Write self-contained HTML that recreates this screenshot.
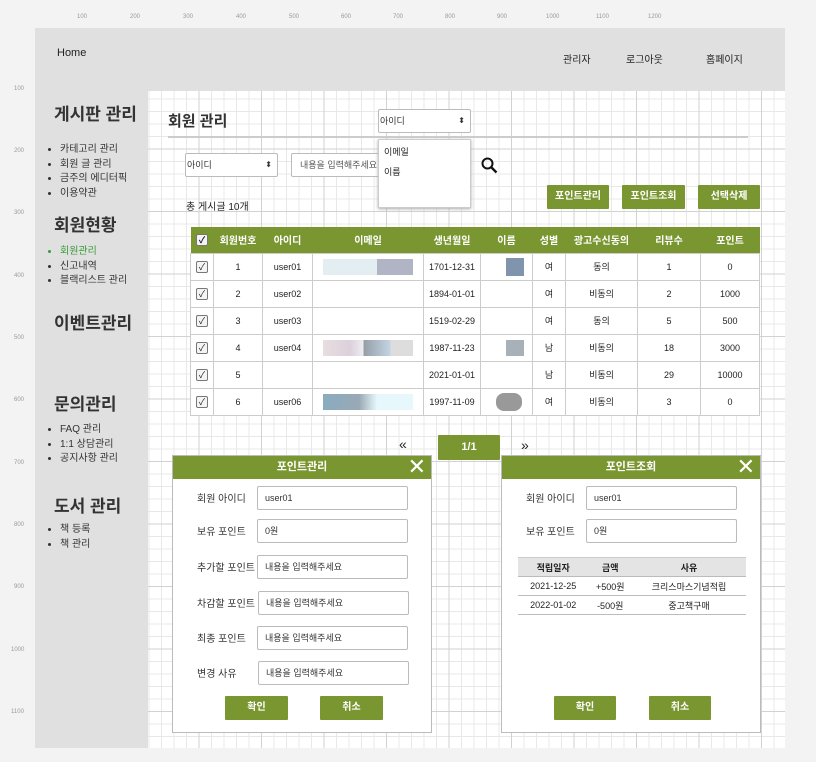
<!DOCTYPE html><html><head><meta charset="utf-8"><style>
*{box-sizing:border-box;margin:0;padding:0}
body{width:816px;height:762px;background:#f3f3f3;font-family:"Liberation Sans","Noto Sans CJK KR",sans-serif;position:relative;overflow:hidden;color:#222}
.abs{position:absolute}
#frame{left:35px;top:28px;width:750px;height:720px;background:#e0e0e0}
#grid{left:148px;top:91px;width:637px;height:657px;background-color:#fff;
background-image:linear-gradient(#d2d2d2 1px,transparent 1px),linear-gradient(90deg,#d2d2d2 1px,transparent 1px),linear-gradient(#e8e8e8 1px,transparent 1px),linear-gradient(90deg,#e8e8e8 1px,transparent 1px);
background-size:62.5px 62.5px,62.5px 62.5px,12.5px 12.5px,12.5px 12.5px;background-position:-12px -5px}
h2.s{position:absolute;left:54px;font-size:17px;font-weight:bold;color:#333;line-height:22px}
ul.s{position:absolute;left:47px;font-size:10px;line-height:14.5px;margin-left:13px;color:#333}
.green{background:#7a9630;color:#fff}
.btn{position:absolute;height:24px;font-size:10px;font-weight:bold;text-align:center;line-height:24px;border-radius:1px}
table{border-collapse:collapse;font-size:9px}
.mt td{border:1px solid #ccc;text-align:center;height:27px;background:#fff}
th{color:#fff;font-size:10px;height:26px;font-weight:bold}
.cb{display:inline-block;width:12px;height:12px;border:1px solid #777;border-radius:2px;background:#f4f4f4;font-size:9px;line-height:10px;color:#222}
.modal{background:#fff;border:1px solid #bbb}
.mh{height:23px;font-size:11px;font-weight:bold;text-align:center;line-height:23px;position:relative}
.x{position:absolute;right:5px;top:1px;font-size:22px;line-height:20px;font-weight:normal}
.lbl{position:absolute;font-size:10px;color:#333}
.inp{position:absolute;height:24px;border:1px solid #bbb;border-radius:2px;font-size:9px;line-height:22px;padding-left:7px;color:#333;background:#fff}
.ruler{font-size:6px;color:#999}
.pt td{border:0;border-bottom:1px solid #bbb;height:19px;text-align:center;background:#fff}
</style></head><body>
<div class="abs ruler" style="left:77px;top:14px;width:700px">
<span class="abs" style="left:0">100</span><span class="abs" style="left:53px">200</span><span class="abs" style="left:106px">300</span><span class="abs" style="left:159px">400</span><span class="abs" style="left:212px">500</span><span class="abs" style="left:264px">600</span><span class="abs" style="left:316px">700</span><span class="abs" style="left:368px">800</span><span class="abs" style="left:420px">900</span><span class="abs" style="left:469px">1000</span><span class="abs" style="left:519px">1100</span><span class="abs" style="left:571px">1200</span></div>
<div class="abs ruler" style="left:14px;top:86px"><div class="abs" style="top:0">100</div><div class="abs" style="top:62px">200</div><div class="abs" style="top:124px">300</div><div class="abs" style="top:187px">400</div><div class="abs" style="top:249px">500</div><div class="abs" style="top:311px">600</div><div class="abs" style="top:374px">700</div><div class="abs" style="top:436px">800</div><div class="abs" style="top:498px">900</div><div class="abs" style="left:-3px;top:561px">1000</div><div class="abs" style="left:-3px;top:623px">1100</div></div>
<div id="frame" class="abs"></div>
<div id="grid" class="abs"></div>
<div class="abs" style="left:57px;top:47px;font-size:11px">Home</div>
<div class="abs" style="left:563px;top:51px;font-size:10px">관리자</div>
<div class="abs" style="left:626px;top:51px;font-size:10px">로그아웃</div>
<div class="abs" style="left:706px;top:51px;font-size:10px">홈페이지</div>

<h2 class="s" style="top:104px">게시판 관리</h2>
<ul class="s" style="top:143px"><li>카테고리 관리</li><li>회원 글 관리</li><li>금주의 에디터픽</li><li>이용약관</li></ul>
<h2 class="s" style="top:215px">회원현황</h2>
<ul class="s" style="top:245px"><li style="color:#3a9a3a">회원관리</li><li>신고내역</li><li>블랙리스트 관리</li></ul>
<h2 class="s" style="top:313px">이벤트관리</h2>
<h2 class="s" style="top:394px">문의관리</h2>
<ul class="s" style="top:423px"><li>FAQ 관리</li><li>1:1 상담관리</li><li>공지사항 관리</li></ul>
<h2 class="s" style="top:496px">도서 관리</h2>
<ul class="s" style="top:523px"><li>책 등록</li><li>책 관리</li></ul>

<div class="abs" style="left:168px;top:110px;font-size:15px;font-weight:bold;color:#333">회원 관리</div>
<div class="abs" style="left:168px;top:136px;width:580px;height:2px;background:#ccc"></div>
<div class="inp" style="left:185px;top:153px;width:93px;padding-left:1px">아이디<span style="position:absolute;right:5px;font-size:8px">⬍</span></div>
<div class="inp" style="left:291px;top:153px;width:100px;padding-left:8px;color:#555">내용을 입력해주세요</div>
<svg class="abs" style="left:481px;top:157px" width="17" height="17" viewBox="0 0 17 17"><circle cx="6.5" cy="6.5" r="5" fill="none" stroke="#111" stroke-width="2"/><line x1="10" y1="10" x2="15.5" y2="15.5" stroke="#111" stroke-width="2.4"/></svg>
<div class="inp" style="left:378px;top:109px;width:93px;padding-left:1px">아이디<span style="position:absolute;right:5px;font-size:8px">⬍</span></div>
<div class="abs" style="left:378px;top:139px;width:93px;height:69px;background:#fff;border:1px solid #ccc;box-shadow:0 1px 3px #aaa;font-size:9px;padding:2px 0 0 5px;line-height:20px">이메일<br>이름</div>
<div class="abs" style="left:186px;top:198px;font-size:10px">총 게시글 10개</div>
<div class="btn green" style="left:547px;top:185px;width:62px">포인트관리</div>
<div class="btn green" style="left:622px;top:185px;width:63px">포인트조회</div>
<div class="btn green" style="left:698px;top:185px;width:62px">선택삭제</div>
<table class="abs mt" style="left:190px;top:227px;width:570px">
<tr class="green"><th style="width:23px"><span class="cb">✓</span></th><th style="width:49px">회원번호</th><th style="width:50px">아이디</th><th style="width:111px">이메일</th><th style="width:57px">생년월일</th><th style="width:52px">이름</th><th style="width:33px">성별</th><th style="width:72px">광고수신동의</th><th style="width:63px">리뷰수</th><th>포인트</th></tr>
<tr><td><span class="cb">✓</span></td><td>1</td><td>user01</td><td><div style="margin:auto;width:90px;height:16px;background:linear-gradient(90deg,#e2eef2 60%,#b0b4c4 60%)"></div></td><td>1701-12-31</td><td><div style="margin-left:25px;width:18px;height:18px;background:#8094ae"></div></td><td>여</td><td>동의</td><td>1</td><td>0</td></tr>
<tr><td><span class="cb">✓</span></td><td>2</td><td>user02</td><td></td><td>1894-01-01</td><td></td><td>여</td><td>비동의</td><td>2</td><td>1000</td></tr>
<tr><td><span class="cb">✓</span></td><td>3</td><td>user03</td><td></td><td>1519-02-29</td><td></td><td>여</td><td>동의</td><td>5</td><td>500</td></tr>
<tr><td><span class="cb">✓</span></td><td>4</td><td>user04</td><td><div style="margin:auto;width:90px;height:16px;background:linear-gradient(90deg,#e8dede 0,#dcd0dc 30%,#eee 45%,#959ea6 45%,#c4d4e6 75%,#ddd 75%)"></div></td><td>1987-11-23</td><td><div style="margin-left:25px;width:18px;height:16px;background:#a8b0b8"></div></td><td>남</td><td>비동의</td><td>18</td><td>3000</td></tr>
<tr><td><span class="cb">✓</span></td><td>5</td><td></td><td></td><td>2021-01-01</td><td></td><td>남</td><td>비동의</td><td>29</td><td>10000</td></tr>
<tr><td><span class="cb">✓</span></td><td>6</td><td>user06</td><td><div style="margin:auto;width:90px;height:16px;background:linear-gradient(90deg,#88acc0 0,#9aa8b4 40%,#e6f8fc 60%)"></div></td><td>1997-11-09</td><td><div style="margin-left:15px;width:26px;height:18px;border-radius:8px;background:#999"></div></td><td>여</td><td>비동의</td><td>3</td><td>0</td></tr>
</table>
<div class="abs" style="left:399px;top:436px;font-size:14px">«</div>
<div class="btn green" style="left:438px;top:435px;width:62px;height:25px;font-size:11px">1/1</div>
<div class="abs" style="left:521px;top:437px;font-size:14px">»</div>

<div class="abs modal" style="left:172px;top:455px;width:260px;height:278px">
<div class="mh green">포인트관리<span class="x">✕</span></div>
<div class="lbl" style="left:24px;top:34px">회원 아이디</div><div class="inp" style="left:84px;top:30px;width:151px">user01</div>
<div class="lbl" style="left:24px;top:67px">보유 포인트</div><div class="inp" style="left:84px;top:63px;width:151px">0원</div>
<div class="lbl" style="left:24px;top:103px">추가할 포인트</div><div class="inp" style="left:84px;top:99px;width:151px">내용을 입력해주세요</div>
<div class="lbl" style="left:24px;top:139px">차감할 포인트</div><div class="inp" style="left:85px;top:135px;width:151px">내용을 입력해주세요</div>
<div class="lbl" style="left:24px;top:174px">최종 포인트</div><div class="inp" style="left:84px;top:170px;width:151px">내용을 입력해주세요</div>
<div class="lbl" style="left:24px;top:209px">변경 사유</div><div class="inp" style="left:85px;top:205px;width:151px">내용을 입력해주세요</div>
<div class="btn green" style="left:52px;top:240px;width:63px">확인</div>
<div class="btn green" style="left:147px;top:240px;width:63px">취소</div>
</div>
<div class="abs modal" style="left:501px;top:455px;width:260px;height:278px">
<div class="mh green">포인트조회<span class="x">✕</span></div>
<div class="lbl" style="left:24px;top:34px">회원 아이디</div><div class="inp" style="left:84px;top:30px;width:151px">user01</div>
<div class="lbl" style="left:24px;top:67px">보유 포인트</div><div class="inp" style="left:84px;top:63px;width:151px">0원</div>
<table class="abs pt" style="left:16px;top:101px;width:228px;font-size:9px">
<tr><td style="background:#e4e4e4;border-top:1px solid #ccc;height:18px;font-weight:bold">적립일자</td><td style="background:#e4e4e4;border-top:1px solid #ccc;font-weight:bold">금액</td><td style="background:#e4e4e4;border-top:1px solid #ccc;font-weight:bold">사유</td></tr>
<tr><td>2021-12-25</td><td>+500원</td><td>크리스마스기념적립</td></tr>
<tr><td>2022-01-02</td><td>-500원</td><td>중고책구매</td></tr>
</table>
<div class="btn green" style="left:52px;top:240px;width:62px">확인</div>
<div class="btn green" style="left:147px;top:240px;width:62px">취소</div>
</div>
</body></html>
